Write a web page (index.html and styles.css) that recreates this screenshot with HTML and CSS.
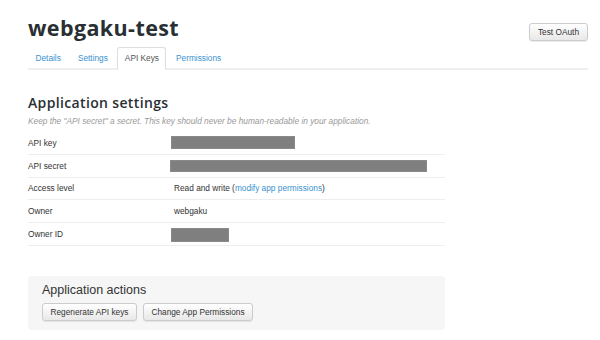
FILE: index.html
```html
<!DOCTYPE html>
<html lang="en">
<head>
    <meta charset="UTF-8">
    <meta name="viewport" content="width=device-width, initial-scale=1.0">
    <title>webgaku-test - API Keys</title>
    <link rel="stylesheet" href="styles.css">
</head>
<body>
    <div class="page">
        <div class="app-header">
            <h1 class="app-title">webgaku-test</h1>
            <button class="btn">Test OAuth</button>
        </div>

        <ul class="tabs">
            <li><a href="#">Details</a></li>
            <li><a href="#">Settings</a></li>
            <li class="active"><a href="#">API Keys</a></li>
            <li><a href="#">Permissions</a></li>
        </ul>

        <div class="section">
            <h2 class="section-title">Application settings</h2>
            <p class="section-note">Keep the "API secret" a secret. This key should never be human-readable in your application.</p>

            <div class="detail-row">
                <div class="detail-label">API key</div>
                <div class="detail-value"><span class="redacted redacted-key"></span></div>
            </div>
            <div class="detail-row">
                <div class="detail-label">API secret</div>
                <div class="detail-value"><span class="redacted redacted-secret"></span></div>
            </div>
            <div class="detail-row">
                <div class="detail-label">Access level</div>
                <div class="detail-value"><span class="value-text">Read and write (<a href="#">modify app permissions</a>)</span></div>
            </div>
            <div class="detail-row">
                <div class="detail-label">Owner</div>
                <div class="detail-value"><span class="value-text">webgaku</span></div>
            </div>
            <div class="detail-row">
                <div class="detail-label">Owner ID</div>
                <div class="detail-value"><span class="redacted redacted-id"></span></div>
            </div>
        </div>

        <div class="actions">
            <h3 class="actions-title">Application actions</h3>
            <div class="actions-buttons">
                <button class="btn">Regenerate API keys</button>
                <button class="btn">Change App Permissions</button>
            </div>
        </div>
    </div>
</body>
</html>
```

FILE: styles.css
```css
* {
    margin: 0;
    padding: 0;
    box-sizing: border-box;
}

body {
    font-family: "Liberation Sans", Arial, sans-serif;
    font-size: 8.3px;
    color: #333;
    background: white;
}

a {
    color: #3a92cf;
    text-decoration: none;
}

.page {
    width: 588px;
    padding-left: 28px;
}

.app-header {
    display: flex;
    justify-content: space-between;
    align-items: flex-start;
    height: 47px;
}

.app-title {
    font-family: "Open Sans", sans-serif;
    font-weight: 700;
    font-size: 21.5px;
    line-height: 26px;
    letter-spacing: 0.4px;
    color: #292f33;
    margin-top: 15px;
}

.btn {
    font-family: "Liberation Sans", Arial, sans-serif;
    font-size: 8.3px;
    color: #333;
    height: 18px;
    padding: 0 8px;
    background: linear-gradient(#fff, #e8e8e8);
    border: 1px solid #ccc;
    border-radius: 3px;
    box-shadow: 0 1px 1px rgba(0, 0, 0, 0.08);
    cursor: pointer;
}

.app-header .btn {
    margin-top: 23px;
}

.tabs {
    list-style: none;
    display: flex;
    border-bottom: 2px solid #eee;
    height: 23px;
}

.tabs li {
    margin-right: 2px;
    margin-bottom: -2px;
}

.tabs a {
    display: block;
    height: 23px;
    line-height: 21px;
    padding: 0 6.5px;
    border: 1px solid transparent;
    border-radius: 3px 3px 0 0;
}

.tabs .active a {
    color: #555;
    background: white;
    border-color: #ddd;
    border-bottom-color: white;
}

.section {
    width: 417px;
    padding-top: 24px;
}

.section-title {
    font-family: "Open Sans", sans-serif;
    font-weight: 600;
    font-size: 14px;
    line-height: 18px;
    letter-spacing: 0.35px;
    color: #292f33;
}

.section-note {
    font-style: italic;
    color: #999;
    line-height: 12px;
    margin-top: 3px;
    margin-bottom: 5px;
}

.detail-row {
    display: flex;
    align-items: center;
    height: 22.75px;
    border-bottom: 1px solid #eee;
}

.detail-label {
    width: 143px;
}

.detail-value {
    display: flex;
    align-items: center;
}

.value-text {
    padding-left: 3px;
}

.redacted {
    display: block;
    height: 13px;
    background: #7f7f7f;
    border: 1px solid #8a8a8a;
}

.redacted-key {
    width: 124px;
}

.redacted-secret {
    width: 257px;
    height: 12px;
    margin-left: -1px;
}

.redacted-id {
    width: 58px;
    height: 14px;
    margin-top: 2px;
}

.actions {
    width: 417px;
    margin-top: 30px;
    padding: 7px 14px 9px;
    background: #f6f6f6;
    border-radius: 4px;
}

.actions-title {
    font-weight: normal;
    font-size: 12.5px;
    line-height: 15px;
    color: #333;
}

.actions-buttons {
    display: flex;
    gap: 6px;
    margin-top: 5px;
}

.actions-buttons .btn {
    width: 95px;
    padding: 0;
}

.actions-buttons .btn + .btn {
    width: 110px;
}
```
